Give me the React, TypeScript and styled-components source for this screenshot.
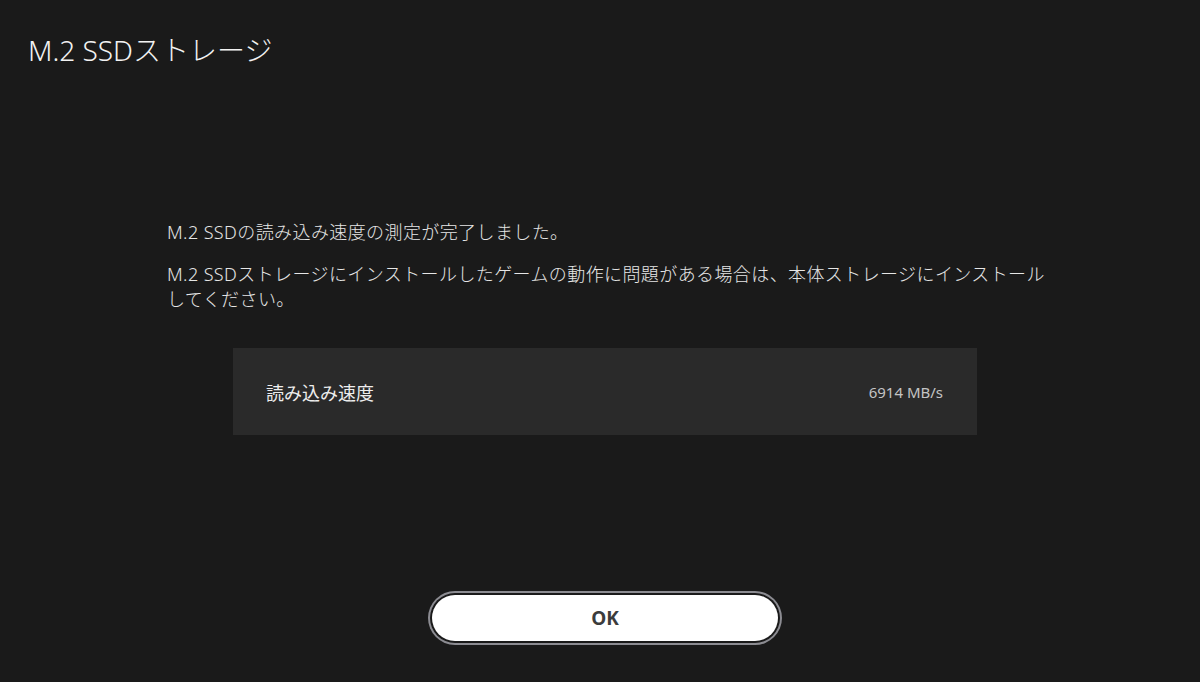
import { createGlobalStyle, styled } from "styled-components";

const GlobalStyle = createGlobalStyle`
  html, body {
    margin: 0;
    padding: 0;
    background: #1a1a1a;
  }
  body {
    font-family: "Noto Sans", "Noto Sans CJK JP", sans-serif;
  }
`;

const App = () => {
  return (
    <>
      <GlobalStyle />
      <St.Screen>
        <St.Title>M.2 SSDストレージ</St.Title>
        <St.Body>
          <St.Message>M.2 SSDの読み込み速度の測定が完了しました。</St.Message>
          <St.Message $gap>
            M.2 SSDストレージにインストールしたゲームの動作に問題がある場合は、本体ストレージにインストールしてください。
          </St.Message>
          <St.ResultCard>
            <St.Label>読み込み速度</St.Label>
            <St.Value>6914 MB/s</St.Value>
          </St.ResultCard>
        </St.Body>
        <St.Footer>
          <St.OkButton type="button">OK</St.OkButton>
        </St.Footer>
      </St.Screen>
    </>
  );
};

export default App;

const St = {
  Screen: styled.div`
    display: flex;
    flex-direction: column;
    width: 1200px;
    height: 682px;
    background: #1a1a1a;
    color: #ececec;
    overflow: hidden;
  `,
  Title: styled.h1`
    margin: 32px 0 0 28px;
    font-size: 28px;
    font-weight: 300;
    line-height: 36px;
    color: #f2f2f2;
  `,
  Body: styled.div`
    display: flex;
    flex-direction: column;
    width: 885px;
    margin: 152px 0 0 167px;
  `,
  Message: styled.p<{ $gap?: boolean }>`
    margin: ${(p) => (p.$gap ? "17px" : "0")} 0 0;
    font-size: 18px;
    font-weight: 300;
    line-height: 25px;
    letter-spacing: 0.4px;
    color: #e6e6e6;
  `,
  ResultCard: styled.div`
    display: flex;
    align-items: center;
    justify-content: space-between;
    box-sizing: border-box;
    width: 744px;
    height: 87px;
    margin: 36px 0 0 66px;
    padding: 0 34px 0 33px;
    background: #2a2a2a;
  `,
  Label: styled.span`
    font-size: 18px;
    color: #ededed;
  `,
  Value: styled.span`
    font-size: 15px;
    color: #c4c4c4;
  `,
  Footer: styled.div`
    display: flex;
    justify-content: center;
    margin-top: auto;
    padding: 0 0 41px 10px;
  `,
  OkButton: styled.button`
    width: 346px;
    height: 46px;
    border: none;
    border-radius: 23px;
    background: #ffffff;
    box-shadow: 0 0 0 2px #1a1a1a, 0 0 0 4px #8c8c92;
    font-family: "Noto Sans", "Noto Sans CJK JP", sans-serif;
    font-size: 19px;
    font-weight: 700;
    color: #3c3c3c;
    cursor: pointer;
  `,
};
